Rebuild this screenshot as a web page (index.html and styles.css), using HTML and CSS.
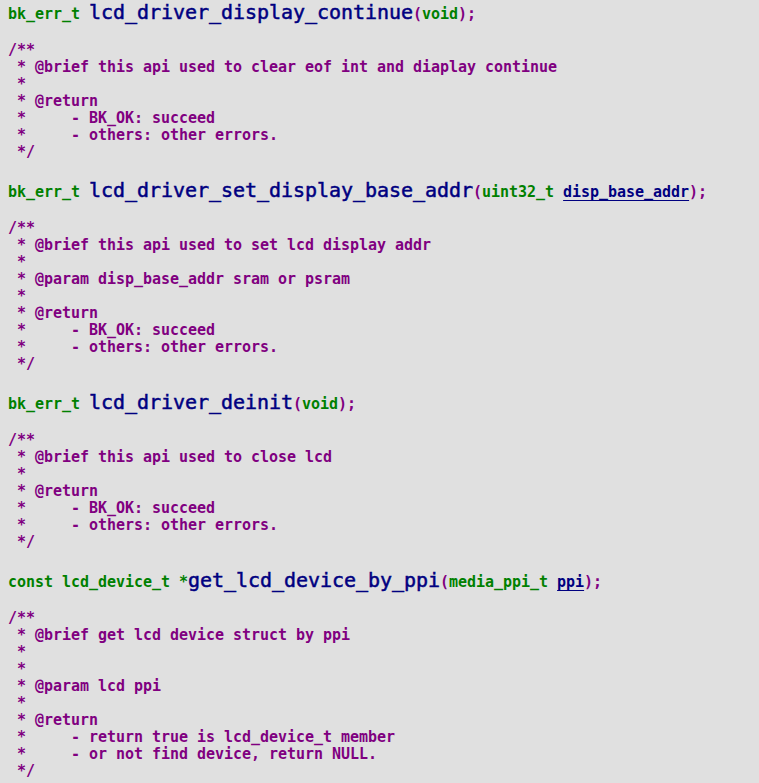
FILE: index.html
```html
<!DOCTYPE html>
<html>
<head>
<meta charset="utf-8">
<link rel="stylesheet" href="styles.css">
</head>
<body>
<div class="listing">
  <div class="sig"><span class="ty">bk_err_t </span><span class="fn">lcd_driver_display_continue</span><span class="pu">(</span><span class="ty">void</span><span class="pu">);</span></div>
  <pre class="doc">/**
 * @brief this api used to clear eof int and diaplay continue
 *
 * @return
 *     - BK_OK: succeed
 *     - others: other errors.
 */</pre>

  <div class="sig"><span class="ty">bk_err_t </span><span class="fn">lcd_driver_set_display_base_addr</span><span class="pu">(</span><span class="ty">uint32_t </span><span class="arg">disp_base_addr</span><span class="pu">);</span></div>
  <pre class="doc">/**
 * @brief this api used to set lcd display addr
 *
 * @param disp_base_addr sram or psram
 *
 * @return
 *     - BK_OK: succeed
 *     - others: other errors.
 */</pre>

  <div class="sig"><span class="ty">bk_err_t </span><span class="fn">lcd_driver_deinit</span><span class="pu">(</span><span class="ty">void</span><span class="pu">);</span></div>
  <pre class="doc">/**
 * @brief this api used to close lcd
 *
 * @return
 *     - BK_OK: succeed
 *     - others: other errors.
 */</pre>

  <div class="sig"><span class="ty">const lcd_device_t *</span><span class="fn">get_lcd_device_by_ppi</span><span class="pu">(</span><span class="ty">media_ppi_t </span><span class="arg">ppi</span><span class="pu">);</span></div>
  <pre class="doc">/**
 * @brief get lcd device struct by ppi
 *
 *
 * @param lcd ppi
 *
 * @return
 *     - return true is lcd_device_t member
 *     - or not find device, return NULL.
 */</pre>
</div>
</body>
</html>
```

FILE: styles.css
```css
html {
  background: #d9d9d9;
}

body {
  margin: 0;
  background: #d9d9d9;
}

.listing {
  background: #e0e0e0;
  padding: 0 8px;
  border-bottom: 1px solid #f6f6f6;
  font-family: "DejaVu Sans Mono", "Liberation Mono", monospace;
}

.sig {
  height: 25px;
  line-height: 25px;
  white-space: pre;
  overflow: hidden;
}

.sig .ty,
.sig .pu,
.sig .arg {
  font-size: 15px;
  font-weight: bold;
  letter-spacing: -0.03px;
}

.ty {
  color: #008000;
}

.pu {
  color: #800080;
}

.fn {
  font-size: 20px;
  color: #000080;
  letter-spacing: -0.04px;
  -webkit-text-stroke: 0.5px #000080;
}

.arg {
  color: #000080;
  text-decoration: underline;
  text-decoration-thickness: 1px;
  text-underline-offset: 3px;
}

.doc {
  margin: 17px 0;
  font-family: "DejaVu Sans Mono", "Liberation Mono", monospace;
  font-size: 15px;
  font-weight: bold;
  line-height: 17px;
  letter-spacing: -0.03px;
  color: #800080;
  white-space: pre;
}
```
